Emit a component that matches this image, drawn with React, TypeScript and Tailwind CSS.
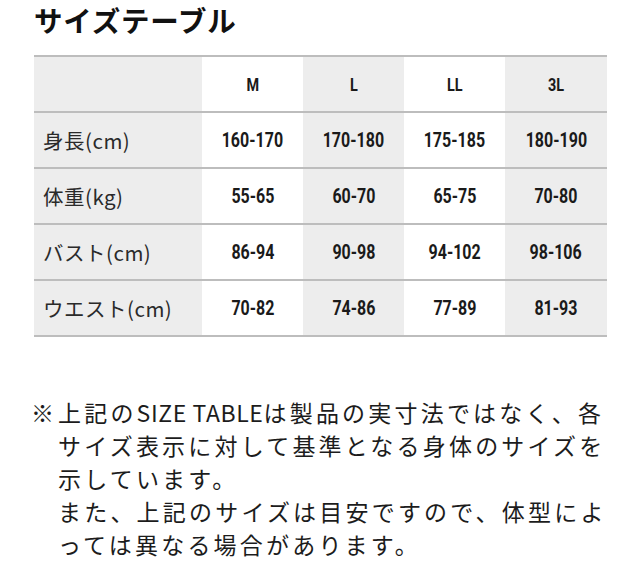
import React from "react";

const sizes = ["M", "L", "LL", "3L"];
const rows: { label: string; values: string[] }[] = [
  { label: "身長(cm)", values: ["160-170", "170-180", "175-185", "180-190"] },
  { label: "体重(kg)", values: ["55-65", "60-70", "65-75", "70-80"] },
  { label: "バスト(cm)", values: ["86-94", "90-98", "94-102", "98-106"] },
  { label: "ウエスト(cm)", values: ["70-82", "74-86", "77-89", "81-93"] },
];

const jp = "font-['Noto_Sans_CJK_JP','Noto_Sans',sans-serif]";

function Num({ children }: { children: React.ReactNode }) {
  return (
    <span className="inline-block scale-x-[0.8] font-['Roboto','Liberation_Sans',sans-serif] text-[20px] font-bold leading-none text-[#1a1a1a]">
      {children}
    </span>
  );
}

export default function App() {
  return (
    <div className={`w-[640px] h-[579px] bg-white ${jp} text-[#222]`}>
      <h1 className="pl-[34px] pt-[1px] text-[28.5px] font-bold leading-[37px] tracking-[0.8px] text-[#111]">
        サイズテーブル
      </h1>
      <div className="ml-[34px] mt-[17px] w-[573px] border-b-2 border-[#bdbdbd]">
        <div className="grid grid-cols-[168px_101px_101px_101px_102px] border-t-2 border-[#bdbdbd] h-[56px]">
          <div className="bg-[#ededed]" />
          {sizes.map((s, i) => (
            <div
              key={s}
              className={`flex items-center justify-center ${i % 2 === 0 ? "bg-white" : "bg-[#ededed]"}`}
            >
              <Num>
                <span className="text-[18px]">{s}</span>
              </Num>
            </div>
          ))}
        </div>
        {rows.map((r) => (
          <div
            key={r.label}
            className="grid grid-cols-[168px_101px_101px_101px_102px] border-t-2 border-[#bdbdbd] h-[56px]"
          >
            <div className="bg-[#ededed] flex items-center pl-[9px] text-[20.5px] tracking-[0.5px] text-[#2a2a2a]">
              {r.label}
            </div>
            {r.values.map((v, i) => (
              <div
                key={i}
                className={`flex items-center justify-center ${i % 2 === 0 ? "bg-white" : "bg-[#ededed]"}`}
              >
                <Num>{v}</Num>
              </div>
            ))}
          </div>
        ))}
      </div>
      <div className="mt-[59px] pl-[31px] pr-[10px] text-[23px] leading-[33px] tracking-[3.2px] text-[#1c1c1c]">
        <div className="flex">
          <span className="w-[27px] shrink-0">※</span>
          <div className="whitespace-nowrap">
            上記の<span className="tracking-[0.6px]">SIZE TABLE</span>は製品の実寸法ではなく、各
            <br />
            サイズ表示に対して基準となる身体のサイズを
            <br />
            示しています。
            <br />
            また、上記のサイズは目安ですので、体型によ
            <br />
            っては異なる場合があります。
          </div>
        </div>
      </div>
    </div>
  );
}
